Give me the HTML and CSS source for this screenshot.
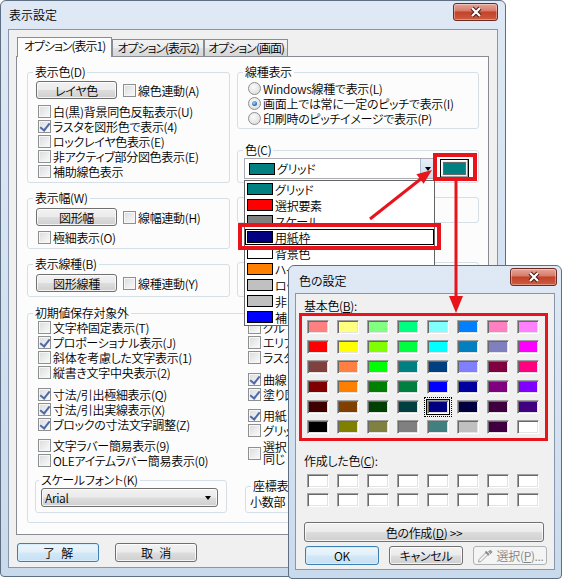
FILE: index.html
```html
<!DOCTYPE html>
<html lang="ja">
<head>
<meta charset="utf-8">
<title>表示設定</title>
<link rel="stylesheet" href="styles.css">
</head>
<body>
<div class="win main">
  <div class="tbar">
    <span class="ttl">表示設定</span>
    <div class="xbtn"><svg width="20" height="12" viewBox="0 0 20 12"><path class="xo" d="M6 2 L14 10 M14 2 L6 10"/><path class="xi" d="M6 2 L14 10 M14 2 L6 10"/></svg></div>
  </div>
  <div class="client">
    <div class="tabs">
      <div class="tab on t1">オプション(表示1)</div>
      <div class="tab t2">オプション(表示2)</div>
      <div class="tab t3">オプション(画面)</div>
    </div>
    <div class="panel">
      <div class="cols">
        <div class="col cl">
          <fieldset class="grp g1">
            <legend>表示色(D)</legend>
            <div class="brow"><div class="btn bw">レイヤ色</div><div class="cb ml"><i class="box"></i>線色連動(A)</div></div>
            <div class="rows r1">
              <div class="cb"><i class="box"></i>白(黒)背景同色反転表示(U)</div>
              <div class="cb"><i class="box on"></i>ラスタを図形色で表示(4)</div>
              <div class="cb"><i class="box"></i>ロックレイヤ色表示(E)</div>
              <div class="cb"><i class="box"></i>非アクティブ部分図色表示(E)</div>
              <div class="cb"><i class="box"></i>補助線色表示</div>
            </div>
          </fieldset>
          <fieldset class="grp g2">
            <legend>表示幅(W)</legend>
            <div class="brow"><div class="btn bw">図形幅</div><div class="cb ml"><i class="box"></i>線幅連動(H)</div></div>
            <div class="rows r2"><div class="cb"><i class="box"></i>極細表示(O)</div></div>
          </fieldset>
          <fieldset class="grp g3">
            <legend>表示線種(B)</legend>
            <div class="brow"><div class="btn bw">図形線種</div><div class="cb ml"><i class="box"></i>線種連動(Y)</div></div>
          </fieldset>
        </div>
        <div class="col cr">
          <fieldset class="grp g4">
            <legend>線種表示</legend>
            <div class="rows">
              <div class="rb"><i class="radio"></i>Windows線種で表示(L)</div>
              <div class="rb"><i class="radio on"></i>画面上では常に一定のピッチで表示(I)</div>
              <div class="rb"><i class="radio"></i>印刷時のピッチイメージで表示(P)</div>
            </div>
          </fieldset>
          <fieldset class="grp g5">
            <legend>色(C)</legend>
            <div class="crow">
              <div class="combo"><span class="sw" style="background:#008080"></span><span>グリッド</span><span class="cdrop"><i class="tri"></i></span></div>
              <div class="colbtn"><span class="colin"></span></div>
            </div>
          </fieldset>
          <div class="grp g6"></div>
          <div class="grp g7"></div>
        </div>
      </div>
      <fieldset class="grp g8">
        <legend>初期値保存対象外</legend>
        <div class="igrid">
          <div class="isub">
            <div class="rows">
              <div class="cb"><i class="box"></i>文字枠固定表示(T)</div>
              <div class="cb"><i class="box on"></i>プロポーショナル表示(J)</div>
              <div class="cb"><i class="box"></i>斜体を考慮した文字表示(1)</div>
              <div class="cb"><i class="box"></i>縦書き文字中央表示(2)</div>
            </div>
            <div class="rows m7">
              <div class="cb"><i class="box on"></i>寸法/引出極細表示(Q)</div>
              <div class="cb"><i class="box on"></i>寸法/引出実線表示(X)</div>
              <div class="cb"><i class="box on"></i>ブロックの寸法文字調整(Z)</div>
            </div>
            <div class="rows m6">
              <div class="cb"><i class="box"></i>文字ラバー簡易表示(9)</div>
              <div class="cb"><i class="box"></i>OLEアイテムラバー簡易表示(0)</div>
            </div>
            <fieldset class="grp gsf">
              <legend>スケールフォント(K)</legend>
              <div class="select"><span>Arial</span><i class="tri"></i></div>
            </fieldset>
          </div>
          <div class="isub rt">
            <div class="rows">
              <div class="cb"><i class="box"></i>グル</div>
              <div class="cb"><i class="box"></i>エリア</div>
              <div class="cb"><i class="box"></i>ラスタ</div>
            </div>
            <div class="rows m7">
              <div class="cb"><i class="box on"></i>曲線</div>
              <div class="cb"><i class="box on"></i>塗り図</div>
            </div>
            <div class="rows m6">
              <div class="cb"><i class="box on"></i>用紙</div>
              <div class="cb"><i class="box"></i>グリッ</div>
            </div>
            <div class="rows m3">
              <div class="cb two"><i class="box"></i><span class="tl">選択<br>同じ</span></div>
            </div>
            <fieldset class="grp gzs">
              <legend>座標表</legend>
              <div class="rows"><div class="cb">小数部</div></div>
            </fieldset>
          </div>
        </div>
      </fieldset>
    </div>
    <div class="bbar">
      <div class="btn bb def">了 解</div>
      <div class="btn bb">取 消</div>
    </div>
  </div>
</div>

<div class="ddlist">
  <div class="ddi"><span class="sw" style="background:#008080"></span>グリッド</div>
  <div class="ddi"><span class="sw" style="background:#ff0000"></span>選択要素</div>
  <div class="ddi"><span class="sw" style="background:#808080"></span>スケール</div>
  <div class="ddi foc"><span class="sw" style="background:#000080"></span>用紙枠</div>
  <div class="ddi"><span class="sw" style="background:#ffffff"></span>背景色</div>
  <div class="ddi"><span class="sw" style="background:#ff8000"></span>ハイ</div>
  <div class="ddi"><span class="sw" style="background:#c0c0c0"></span>ロッ</div>
  <div class="ddi"><span class="sw" style="background:#c0c0c0"></span>非</div>
  <div class="ddi"><span class="sw" style="background:#0000ff"></span>補</div>
</div>

<div class="win dlg">
  <div class="tbar">
    <span class="ttl">色の設定</span>
    <div class="xbtn"><svg width="20" height="12" viewBox="0 0 20 12"><path class="xo" d="M6 2 L14 10 M14 2 L6 10"/><path class="xi" d="M6 2 L14 10 M14 2 L6 10"/></svg></div>
  </div>
  <div class="client dclient">
    <div class="dl">基本色(<u>B</u>):</div>
    <div class="sgrid basic">
      <i class="s" style="background:#ff8080"></i><i class="s" style="background:#ffff80"></i><i class="s" style="background:#80ff80"></i><i class="s" style="background:#00ff80"></i><i class="s" style="background:#80ffff"></i><i class="s" style="background:#0080ff"></i><i class="s" style="background:#ff80c0"></i><i class="s" style="background:#ff80ff"></i>
      <i class="s" style="background:#ff0000"></i><i class="s" style="background:#ffff00"></i><i class="s" style="background:#80ff00"></i><i class="s" style="background:#00ff40"></i><i class="s" style="background:#00ffff"></i><i class="s" style="background:#0080c0"></i><i class="s" style="background:#8080c0"></i><i class="s" style="background:#ff00ff"></i>
      <i class="s" style="background:#804040"></i><i class="s" style="background:#ff8040"></i><i class="s" style="background:#00ff00"></i><i class="s" style="background:#008080"></i><i class="s" style="background:#004080"></i><i class="s" style="background:#8080ff"></i><i class="s" style="background:#800040"></i><i class="s" style="background:#ff0080"></i>
      <i class="s" style="background:#800000"></i><i class="s" style="background:#ff8000"></i><i class="s" style="background:#008000"></i><i class="s" style="background:#008040"></i><i class="s" style="background:#0000ff"></i><i class="s" style="background:#0000a0"></i><i class="s" style="background:#800080"></i><i class="s" style="background:#8000ff"></i>
      <i class="s" style="background:#400000"></i><i class="s" style="background:#804000"></i><i class="s" style="background:#004000"></i><i class="s" style="background:#004040"></i><i class="s cur" style="background:#000080"></i><i class="s" style="background:#000040"></i><i class="s" style="background:#400040"></i><i class="s" style="background:#400080"></i>
      <i class="s" style="background:#000000"></i><i class="s" style="background:#808000"></i><i class="s" style="background:#808040"></i><i class="s" style="background:#808080"></i><i class="s" style="background:#408080"></i><i class="s" style="background:#c0c0c0"></i><i class="s" style="background:#400040"></i><i class="s" style="background:#ffffff"></i>
    </div>
    <div class="dl dl2">作成した色(<u>C</u>):</div>
    <div class="sgrid custom">
      <i class="s"></i><i class="s"></i><i class="s"></i><i class="s"></i><i class="s"></i><i class="s"></i><i class="s"></i><i class="s"></i>
      <i class="s"></i><i class="s"></i><i class="s"></i><i class="s"></i><i class="s"></i><i class="s"></i><i class="s"></i><i class="s"></i>
    </div>
    <div class="btn wide">色の作成(<u>D</u>) &gt;&gt;</div>
    <div class="dbtns">
      <div class="btn db def">OK</div>
      <div class="btn db">キャンセル</div>
      <div class="btn db dis"><svg class="pip" width="18" height="14" viewBox="0 0 18 14"><path d="M1.5 13 L2 10.5 L9 3.5 L11 5.5 L4 12.5 Z" fill="#f4f4f4" stroke="#a2a2a2" stroke-width="1"/><path d="M8.5 2.5 L12 6" stroke="#8c8c8c" stroke-width="2"/><path d="M11 2.5 L13.5 0.8 L15.6 2.9 L13.5 5.2 Z" fill="#9a9a9a"/></svg><span>選択(<u>P</u>)...</span></div>
    </div>
  </div>
</div>

<svg class="anno" width="564" height="581" viewBox="0 0 564 581">
  <g fill="none" stroke="#e8141b" stroke-width="4">
    <rect x="435" y="155" width="40" height="24"/>
    <rect x="240" y="225" width="199" height="23"/>
  </g>
  <rect x="300.5" y="314.5" width="246" height="125" fill="none" stroke="#e8141b" stroke-width="3"/>
  <line x1="370" y1="219" x2="422" y2="178" stroke="#e8141b" stroke-width="3"/>
  <polygon points="432,170 416.4,174.2 423.6,183.8" fill="#e8141b"/>
  <line x1="456" y1="181" x2="456" y2="298" stroke="#e8141b" stroke-width="3"/>
  <polygon points="449,296 463,296 456,313" fill="#e8141b"/>
</svg>
</body>
</html>
```
FILE: styles.css
```css
* { box-sizing: border-box; margin: 0; padding: 0; }
html, body { width: 564px; height: 581px; }
body {
  position: relative;
  overflow: hidden;
  background: #ffffff;
  font-family: "Noto Sans CJK JP", "Noto Sans", sans-serif;
  font-size: 12px;
  font-weight: 350;
  line-height: 15px;
  letter-spacing: -0.3px;
  color: #000;
  font-feature-settings: "palt" 1;
}
i { font-style: normal; display: block; }

/* windows */
.win {
  position: absolute;
  display: flex;
  flex-direction: column;
  border: 1px solid #5f6f83;
  border-radius: 6px 6px 4px 4px;
  background: linear-gradient(#dfe9f5, #cadaed);
  padding: 0 7px 8px;
}
.main { left: 0; top: 0; width: 506px; height: 577px; z-index: 1; }
.dlg { left: 288px; top: 265px; width: 274px; height: 314px; z-index: 6; padding: 0 6px 8px; }
.tbar { display: flex; align-items: flex-start; height: 28px; flex: none; }
.dlg .tbar { height: 27px; }
.ttl { flex: 1; padding: 6px 0 0 1px; letter-spacing: 0; }
.dlg .ttl { padding: 7px 0 0 4px; }
.xbtn {
  width: 45px; height: 18px; margin-top: 2px;
  border: 1px solid #6b2a22; border-radius: 3px;
  background: linear-gradient(#e6a497, #d8806f 40%, #c3432a 52%, #cd5d3f);
  box-shadow: inset 0 0 0 1px rgba(255,255,255,0.35);
  display: flex; align-items: center; justify-content: center;
}
.dlg .xbtn { width: 47px; margin-right: -2px; }
.xo { stroke: #4a1a14; stroke-width: 4.2; fill: none; }
.xi { stroke: #ffffff; stroke-width: 2.2; fill: none; }

.client {
  flex: 1;
  min-height: 0;
  background: #f0f0f0;
  border: 1px solid #8797ab;
  display: flex;
  flex-direction: column;
  padding: 7px 0 0 8px;
}

/* tabs */
.tabs { display: flex; align-items: flex-end; height: 19px; position: relative; z-index: 2; }
.tab {
  height: 17px;
  border: 1px solid #898c95;
  border-bottom: 0;
  background: linear-gradient(#f3f3f3, #ececec 50%, #e1e1e1 50%, #d6d6d6);
  text-align: center;
  white-space: nowrap;
  line-height: 15px;
  letter-spacing: -1px;
}
.tab.on { height: 20px; margin-bottom: -1px; background: #fcfcfc; line-height: 16px; }
.t1 { width: 95px; }
.t2 { width: 92px; }
.t3 { width: 84px; }
.panel {
  width: 473px; height: 479px; margin-left: -1px;
  border: 1px solid #898c95; background: #fcfcfc;
  padding: 8px 0 0 10px;
}

/* group boxes */
.grp { border: 1px solid #d5dfe5; border-radius: 3px; padding: 0 8px; min-width: 0; }
.grp > legend { padding: 0 2px; margin-left: -3px; line-height: 14px; height: 14px; white-space: nowrap; }
.cols { display: flex; gap: 7px; align-items: flex-start; }
.col { display: flex; flex-direction: column; }
.cl { width: 203px; }
.cr { width: 242px; }
.g1 { padding-top: 2px; padding-bottom: 3px; }
.g2 { margin-top: 8px; padding-top: 3px; padding-bottom: 3px; }
.g3 { margin-top: 8px; padding-top: 3px; padding-bottom: 4px; }
.g4 { padding-top: 2px; padding-bottom: 2px; }
.g5 { margin-top: 14px; padding-top: 1px; padding-bottom: 3px; }
.g6 { margin-top: 14px; height: 26px; }
.g7 { margin-top: 39px; height: 35px; }
.g8 { margin-top: 9px; width: 452px; padding-bottom: 9px; }

.brow { display: flex; align-items: center; height: 18px; }
.rows { display: flex; flex-direction: column; }
.r1 { margin-top: 5px; }
.r2 { margin-top: 4px; }
.m7 { margin-top: 7px; }
.m6 { margin-top: 6px; }
.m3 { margin-top: 3px; }
.rows .cb, .rows .rb { padding-left: 2px; }
.ml { margin-left: 6px; }

.cb, .rb { display: flex; align-items: center; height: 15px; white-space: nowrap; }
.cb.two { height: 24px; }
.tl { line-height: 12px; }
.box {
  width: 13px; height: 13px; flex: none; margin-right: 2px;
  border: 1px solid #8e8f8f;
  background: linear-gradient(135deg, #d9dbde, #fbfbfb);
  box-shadow: inset 0 0 0 1px #f6f6f6;
  position: relative;
}
.box.on::after {
  content: "";
  position: absolute;
  left: 3px; top: 0;
  width: 4px; height: 8px;
  border: solid #4e68a8;
  border-width: 0 2px 2px 0;
  transform: rotate(38deg);
}
.radio {
  width: 13px; height: 13px; flex: none; margin-right: 2px;
  border-radius: 50%;
  border: 1px solid #8e8f8f;
  background: radial-gradient(circle at 40% 35%, #fbfbfb, #d7d7d7);
  position: relative;
}
.radio.on::after {
  content: "";
  position: absolute;
  left: 3px; top: 3px; width: 5px; height: 5px;
  border-radius: 50%;
  background: radial-gradient(circle at 40% 35%, #a8d6fa, #2c6fb5 65%, #17498a);
}

/* buttons */
.btn {
  display: flex; align-items: center; justify-content: center;
  border: 1px solid #707070; border-radius: 3px;
  background: linear-gradient(#f2f2f2, #ebebeb 48%, #dddddd 52%, #cfcfcf);
  box-shadow: inset 0 0 0 1px rgba(255,255,255,0.75);
  white-space: nowrap; line-height: 15px;
}
.btn.def {
  border-color: #3c7fb1;
  background: linear-gradient(#eef6fc, #e2eff9 48%, #d3e8f7 52%, #c5e0f3);
  box-shadow: inset 0 0 0 1px #d6edfc;
}
.bw { width: 81px; height: 18px; flex: none; }
.bbar { display: flex; gap: 16px; margin-top: 8px; }
.bb { width: 82px; height: 19px; word-spacing: 4px; }

/* colour combo */
.crow { display: flex; align-items: center; height: 21px; margin-left: -2px; }
.combo {
  width: 191px; height: 21px; flex: none;
  border: 1px solid #abadb3; background: #fff;
  display: flex; align-items: center; padding-left: 4px;
}
.sw { display: block; width: 26px; height: 12px; border: 1px solid #000; flex: none; margin-right: 2px; }
.cdrop {
  margin-left: auto; width: 14px; height: 19px;
  background: linear-gradient(#e8eff7, #cddbea);
  border-left: 1px solid #a9bccf;
  display: flex; align-items: center; justify-content: center;
}
.tri { width: 0; height: 0; border-left: 3.5px solid transparent; border-right: 3.5px solid transparent; border-top: 4px solid #000; }
.colbtn {
  margin-left: 5px; width: 29px; height: 19px; flex: none;
  border: 1px solid #000; background: #f0f0f0; padding: 2px;
  box-shadow: inset -1px -1px 0 #a0a0a0, inset 1px 1px 0 #fff;
}
.colin { display: block; height: 100%; background: #008080; border: 1px solid #6a6a6a; }

/* lower group */
.igrid { display: grid; grid-template-columns: 192px 200px; column-gap: 18px; margin-left: -1px; }
.isub { display: flex; flex-direction: column; }
.isub .rows .cb { padding-left: 3px; }
.gsf { margin-top: 5px; padding: 1px 8px 5px 5px; }
.gsf > legend { margin-left: -2px; }
.gzs { margin-top: 14px; padding: 1px 4px 3px 4px; }
.gzs > legend { margin-left: 1px; }
.gzs .rows .cb { padding-left: 0; }
.select {
  height: 19px; display: flex; align-items: center; justify-content: space-between;
  padding: 0 6px 0 3px;
  border: 1px solid #707070; border-radius: 3px;
  background: linear-gradient(#f2f2f2, #ebebeb 48%, #dddddd 52%, #cfcfcf);
  box-shadow: inset 0 0 0 1px rgba(255,255,255,0.75);
}

/* dropdown list */
.ddlist {
  position: absolute; left: 244px; top: 180px; width: 191px; height: 146px;
  border: 1px solid #646464; background: #fff; z-index: 4; overflow: hidden;
}
.ddi { height: 16px; display: flex; align-items: center; padding-left: 2px; white-space: nowrap; }
.ddi.foc { border: 1px solid #000; padding-left: 1px; }

/* colour dialog */
.dclient { padding: 4px 0 0 8px; }
.dl { line-height: 15px; }
.sgrid { display: grid; grid-template-columns: repeat(8, 22px); grid-auto-rows: 14px; column-gap: 8px; margin-left: 3px; }
.basic { margin-top: 7px; row-gap: 6px; }
.dl2 { margin-top: 19px; }
.custom { margin-top: 6px; row-gap: 5px; }
.s {
  display: block;
  background: #fff;
  border: 1px solid;
  border-color: #a0a0a0 #ffffff #ffffff #a0a0a0;
  box-shadow: inset 1px 1px 0 #696969, inset -1px -1px 0 #e3e3e3;
}
.s.cur { outline: 1px solid #000; position: relative; }
.s.cur::after { content: ""; position: absolute; left: -4px; top: -4px; right: -4px; bottom: -4px; border: 1px dotted #000; }
.wide { width: 240px; height: 20px; margin-top: 15px; }
.dbtns { display: flex; gap: 10px; margin-top: 4px; margin-left: 1px; }
.db { width: 74px; height: 19px; }
.btn.dis { border-color: #adb2b5; background: #f4f4f4; color: #838383; box-shadow: none; }
.pip { margin-right: 2px; }

/* annotations */
.anno { position: absolute; left: 0; top: 0; z-index: 10; pointer-events: none; }
```
